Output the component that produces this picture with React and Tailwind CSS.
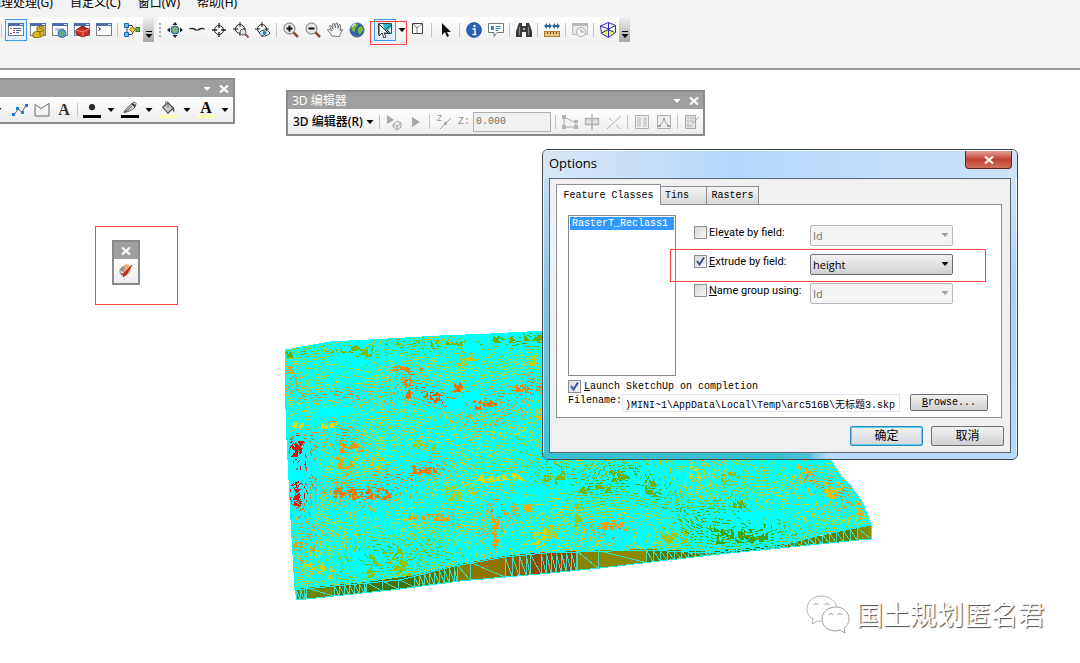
import React from 'react';

// --- Terrain data ---

// Hills and valleys of the surface: x, y, radius x, radius y, height (-1 green, 1 red)
const BUMPS = [
  [300, 352, 24, 10, -0.6], [360, 352, 40, 14, -0.5], [430, 346, 40, 12, -0.6], [515, 340, 50, 10, -0.8],
  [292, 375, 12, 14, 0.6], [320, 395, 50, 8, 0.6], [345, 375, 30, 10, 0.1], [405, 385, 24, 24, 0.4],
  [435, 395, 26, 14, 0.5], [470, 400, 40, 14, 0.5], [530, 388, 24, 16, 0.5], [505, 422, 18, 10, 0.4],
  [325, 424, 50, 8, 0.2], [298, 450, 14, 18, 1.3], [298, 490, 16, 24, 1.4], [345, 445, 26, 16, 0.5],
  [365, 490, 44, 18, 0.6], [425, 470, 26, 12, 0.5], [495, 480, 34, 10, 0.1], [545, 475, 40, 24, -0.5],
  [430, 518, 34, 10, 0.4], [493, 530, 14, 28, 0.4], [520, 508, 24, 8, 0.4], [380, 560, 50, 20, -0.7],
  [300, 540, 20, 20, 0.4], [440, 555, 30, 16, -0.4], [615, 478, 50, 20, -0.7], [695, 468, 18, 16, 0.3],
  [655, 490, 30, 20, -0.6], [806, 470, 16, 20, 0.4], [615, 528, 30, 12, 0.5], [740, 532, 60, 18, -1.2],
  [845, 490, 30, 24, 0.4], [700, 510, 40, 14, -0.5], [735, 480, 24, 14, -0.3], [830, 515, 30, 12, 0.1],
];

// Larger facets that stay visible between the mesh lines: x, y, width, height, count, colour
const FACETS = [
  [423, 391, 24, 12, 6, '#ee5f00'], [404, 386, 8, 14, 4, '#ea6a00'], [386, 365, 40, 6, 10, '#e88800'],
  [403, 370, 8, 18, 5, '#e88000'], [464, 398, 34, 12, 10, '#e87400'], [515, 384, 30, 8, 7, '#ee8400'],
  [452, 380, 14, 12, 6, '#ea7000'], [290, 441, 14, 16, 8, '#e80c00'], [292, 482, 12, 26, 9, '#ee1800'],
  [290, 421, 55, 7, 11, '#e8dc00'], [338, 440, 28, 14, 11, '#ec9800'], [332, 486, 62, 14, 24, '#e87a00'],
  [403, 466, 38, 8, 10, '#ec7c00'], [470, 474, 60, 8, 12, '#dfe000'], [404, 513, 46, 8, 12, '#eca000'],
  [491, 515, 7, 34, 8, '#eca000'], [510, 503, 26, 10, 8, '#e8b000'], [360, 545, 54, 34, 28, '#90c400'],
  [285, 366, 12, 12, 5, '#eca000'], [284, 350, 12, 6, 3, '#5ab000'], [350, 344, 26, 14, 10, '#80b800'],
  [490, 335, 54, 6, 12, '#6ab000'], [430, 340, 40, 6, 8, '#78b400'], [540, 470, 30, 16, 9, '#86b800'],
  [576, 484, 40, 10, 9, '#74b400'], [606, 469, 22, 12, 8, '#70b000'], [642, 478, 20, 20, 9, '#70b000'],
  [686, 462, 18, 18, 8, '#e4dc00'], [798, 462, 18, 22, 10, '#ecb400'], [597, 520, 32, 14, 12, '#eea400'],
  [714, 526, 56, 18, 34, '#40a400'], [730, 500, 20, 8, 6, '#68b400'], [820, 480, 26, 20, 10, '#ecc000'],
  [545, 525, 22, 14, 8, '#c4cc00'], [573, 503, 12, 26, 8, '#a0c400'], [516, 355, 24, 12, 8, '#c8d000'],
  [455, 352, 24, 14, 7, '#c8c400'], [720, 470, 20, 16, 7, '#98c000'], [334, 455, 20, 30, 11, '#eca400'],
  [288, 538, 30, 14, 6, '#ec9c00'], [528, 528, 22, 20, 10, '#d8d800'], [855, 498, 8, 22, 6, '#ecb400'],
  [300, 560, 40, 20, 9, '#d8d400'], [660, 525, 30, 20, 10, '#a8c400'], [536, 405, 6, 20, 3, '#e8c000'],
  [365, 455, 24, 20, 9, '#d8cc00'], [440, 485, 40, 20, 12, '#c0cc00'], [410, 440, 30, 10, 6, '#a8c800'],
];

const PALETTE = ['#48a800', '#70b400', '#98c000', '#bccc00', '#dcd800', '#e8bc00', '#ec9800', '#ec7400', '#e84400', '#e00c00'];

// Upper and lower edge of the extruded side wall
const WALL_TOP = [[295, 589], [335, 585], [400, 579], [455, 565], [505, 556], [545, 552], [645, 549], [710, 552], [780, 545], [820, 534], [871, 525]];
const WALL_BOTTOM = [[297, 600], [400, 589], [460, 581], [540, 574], [600, 568], [660, 561], [720, 554], [780, 548], [869, 539], [871, 539]];

// Wall panels: start, end, step of the mesh, fill
const PANELS = [
  [296, 306, 4, '#6c8400'], [306, 334, 28, '#6c8400'], [334, 366, 5, '#4c7400'], [366, 414, 16, '#467200'],
  [414, 457, 5, '#587800'], [457, 470, 13, '#8a8000'], [470, 505, 35, '#907400'], [505, 530, 7, '#8c6000'],
  [530, 541, 11, '#904c00'], [541, 577, 5, '#884c00'], [577, 598, 21, '#848400'], [598, 646, 48, '#8c8a00'],
  [646, 712, 7, '#587c00'], [712, 780, 8, '#407400'], [780, 857, 7, '#608000'], [857, 871, 14, '#848c00'],
];

// --- Helper functions ---

function createRandom(seed) {
  let s = seed;
  return () => {
    s = (s * 1664525 + 1013904223) % 4294967296;
    return s / 4294967296;
  };
}

function edgeY(points, x) {
  for (let i = 1; i < points.length; i++) {
    const [x0, y0] = points[i - 1];
    const [x1, y1] = points[i];
    if (x <= x1) return y0 + ((y1 - y0) * (x - x0)) / (x1 - x0);
  }
  return points[points.length - 1][1];
}

function heightAt(x, y) {
  let h = Math.sin(x / 23 + y / 17) * 0.1 + Math.sin(x / 11 - y / 9) * 0.08;
  BUMPS.forEach(([bx, by, rx, ry, v]) => {
    h += v * Math.exp(-(((x - bx) / rx) ** 2) - ((y - by) / ry) ** 2);
  });
  return h;
}

// One path per palette colour, made of short strokes that follow the contours
function buildContours() {
  const random = createRandom(77);
  const paths = PALETTE.map(() => '');
  for (let row = 334; row < 592; row += 3) {
    for (let col = 284; col < 872; col += 5) {
      const x = col + random() * 3;
      const y = row + Math.sin(x / 14 + row / 30) * 3 + Math.cos(x / 37) * 4 + random() * 0.6;
      const skip = random();
      if (x > 552 && y < 456) continue;
      const cover = 0.76 + 0.5 * Math.sin(x / 31 + y / 13) * Math.sin(y / 21 - x / 57);
      if (skip > cover) continue;
      const h = heightAt(x, y);
      const gx = heightAt(x + 1, y) - h;
      const gy = (heightAt(x, y + 1) - h) * 1.4 + 0.025;
      const len = Math.hypot(gx, gy) || 1;
      const size = 2 + random() * 3;
      const dx = (gy / len) * size;
      const dy = (-gx / len) * size;
      const index = Math.max(0, Math.min(9, Math.round(4 + h * 4.6 + (random() - 0.5) * 1.6)));
      paths[index] += `M${x.toFixed(1)} ${y.toFixed(1)}l${dx.toFixed(1)} ${dy.toFixed(1)}`;
    }
  }
  return paths;
}

function buildFacets() {
  const random = createRandom(12);
  return FACETS.map(([fx, fy, w, h, count, fill]) => {
    let d = '';
    for (let i = 0; i < count; i++) {
      const width = 3 + random() * 5;
      const height = 3 + random() * 5;
      const x = fx + random() * Math.max(1, w - width);
      const y = fy + random() * Math.max(1, h - height);
      const kind = Math.floor(random() * 4);
      if (kind === 0) d += `M${x} ${y}h${width}l${-width / 2} ${height}z`;
      if (kind === 1) d += `M${x} ${y + height}h${width}v${-height}z`;
      if (kind === 2) d += `M${x} ${y}v${height}h${width}z`;
      if (kind === 3) d += `M${x} ${y + height}h${width}l${-width / 2} ${-height}z`;
    }
    return { d, fill };
  });
}

function buildWall() {
  return PANELS.map(([start, end, step, fill]) => {
    const points = `${start},${edgeY(WALL_TOP, start)} ${end},${edgeY(WALL_TOP, end)} ${end},${edgeY(WALL_BOTTOM, end)} ${start},${edgeY(WALL_BOTTOM, start)}`;
    let mesh = '';
    for (let x = start; x < end; x += step) {
      const next = Math.min(end, x + step);
      mesh += `M${x} ${edgeY(WALL_BOTTOM, x)}V${edgeY(WALL_TOP, x)}L${next} ${edgeY(WALL_BOTTOM, next)}`;
    }
    return { points, mesh, fill };
  });
}

const CONTOURS = buildContours();
const FACET_PATHS = buildFacets();
const WALL = buildWall();

function Terrain() {
  const surface =
    'M285 350L308 346L330 342L370 340L440 336L490 334L545 331L700 331L818 452L832 462L841 476L850 485L862 502L867 513L871 525L820 535L780 546L710 553L645 550L545 553L505 557L455 566L400 580L335 586L295 590L291 520L287 440L285 380Z';
  return (
    <svg className="absolute left-[280px] top-[255px] h-[280px] w-[600px]" viewBox="280 325 600 280" shapeRendering="crispEdges" aria-hidden="true">
      <clipPath id="surface"><path d={surface} /></clipPath>
      <path d={surface} fill="#00ffff" />
      <g clipPath="url(#surface)">
        {CONTOURS.map((d, i) => (
          <path key={i} d={d} stroke={PALETTE[i]} strokeWidth="1" fill="none" />
        ))}
        {FACET_PATHS.map((facet, i) => (
          <path key={i} d={facet.d} fill={facet.fill} />
        ))}
      </g>
      {WALL.map((panel) => (
        <g key={panel.points}>
          <polygon points={panel.points} fill={panel.fill} />
          <path d={panel.mesh} stroke="#40dcc0" strokeWidth="1" fill="none" />
        </g>
      ))}
      <polyline points={WALL_BOTTOM.map((p) => p.join(',')).join(' ')} stroke="#20f0e8" strokeWidth="1" fill="none" />
      <path d="M295 589L297 600M871 525V539" stroke="#20f0e8" strokeWidth="1" fill="none" />
      <path d={surface} stroke="#00ffff" strokeWidth="1" fill="none" />
    </svg>
  );
}

// --- Icons ---

function Icon({ children, className = 'size-4' }) {
  return (
    <svg className={`${className} shrink-0`} viewBox="0 0 16 16" fill="none" aria-hidden="true">
      {children}
    </svg>
  );
}

function WindowFrame() {
  return (
    <>
      <rect x="0.5" y="1.5" width="15" height="12" fill="#fff" stroke="#7c8088" />
      <path d="M0 1h16v3H0z" fill="#4c6cac" />
      <path d="M12 2h3v1h-3z" fill="#d8e4f8" />
    </>
  );
}

const ICONS = {
  contents: (
    <>
      <WindowFrame />
      <path d="M2 6.5h2M5 8.5h2M5 10.5h2" stroke="#d04040" />
      <path d="M5 6.5h8M8 8.5h5M8 10.5h3M2 11.5h2" stroke="#3c70b8" />
    </>
  ),
  catalog: (
    <>
      <WindowFrame />
      <path d="M3 11l4-2v-4l4-1 3 1v8l-5 3-6-1z" fill="#e0b820" stroke="#8c6c08" />
      <path d="M7 9l3 1v4M10 10l4-2M9 6l3 1" stroke="#7c6008" />
    </>
  ),
  search: (
    <>
      <WindowFrame />
      <path d="M3 6h9v3H3z" fill="#c0ccdc" />
      <circle cx="10" cy="11.500" r="4" fill="#58a8d8" stroke="#2c6c98" />
      <path d="M8 10l3-1 1 2-2 3z" fill="#60b050" />
    </>
  ),
  toolbox: (
    <>
      <WindowFrame />
      <path d="M2 8l5-3 8 2v5l-6 3-7-3z" fill="#cc3028" stroke="#781410" />
      <path d="M2 8l7 2 6-3M9 10v5" stroke="#f08478" />
      <path d="M6 6l2-2 3 1v2" stroke="#641410" />
    </>
  ),
  python: (
    <>
      <WindowFrame />
      <path d="M2.500 5.500l2 1.500-2 1.500" stroke="#202020" />
    </>
  ),
  model: (
    <>
      <path d="M3 5v6M5 3.500h3l2 3.500M5 12.500h3l2-4M10 7.500h4" stroke="#404040" />
      <path d="M0.500 1.500h4v4h-4zM0.500 10.500h4v4h-4z" fill="#68b8f0" stroke="#1c68b0" />
      <path d="M8.500 5l3 2.500-3 3-3-3z" fill="#f0d040" stroke="#907010" />
      <rect x="12" y="5.500" width="3.500" height="4" fill="#68b858" stroke="#307828" />
    </>
  ),
  navigate: (
    <>
      <circle cx="8" cy="8" r="4" fill="#58a0d0" stroke="#406080" />
      <path d="M6 6l3-1 2 3-3 3-2-2z" fill="#90b850" />
      <path d="M8 0l2.500 3h-5zM8 16l2.500-3h-5zM0 8l3-2.500v5zM16 8l-3-2.500v5z" fill="#202020" />
    </>
  ),
  fly: <path d="M0 7c3-1.500 5-1 7 .5l1 1 1-1c2-1.500 4-2 7-.5-3-.3-5 0-6 1.200H6C5 7 3 6.700 0 7z" fill="#202020" stroke="#202020" strokeWidth="0.500" />,
  center: (
    <>
      <circle cx="8" cy="8" r="4.500" stroke="#202020" />
      <path d="M8 1v5M8 10v5M1 8h5M10 8h5" stroke="#202020" strokeWidth="1.300" />
    </>
  ),
  zoomTarget: (
    <>
      <circle cx="7" cy="7" r="4.500" stroke="#202020" />
      <path d="M7 0v5M0 7h5M7 10v4M10 7h3" stroke="#202020" />
      <circle cx="10" cy="10" r="3" fill="#e0e0e0" stroke="#606060" />
      <path d="M12 12l3.500 3.500" stroke="#885850" strokeWidth="2" />
    </>
  ),
  observer: (
    <>
      <circle cx="7" cy="7" r="4.500" stroke="#202020" />
      <path d="M7 0v5M0 7h5M7 10v5M10 7h4" stroke="#202020" />
      <path d="M4 11c3-4 8-4 11 0-3 4-8 4-11 0z" fill="#e8f4fc" stroke="#404040" />
      <circle cx="9.500" cy="11" r="2" fill="#2080c0" />
    </>
  ),
  zoomIn: (
    <>
      <path d="M10 10l5 5" stroke="#984838" strokeWidth="2.500" />
      <circle cx="6.500" cy="6.500" r="5.500" fill="#e8e8e8" stroke="#707070" />
      <path d="M3.500 6.500h6M6.500 3.500v6" stroke="#101010" strokeWidth="2" />
    </>
  ),
  zoomOut: (
    <>
      <path d="M10 10l5 5" stroke="#984838" strokeWidth="2.500" />
      <circle cx="6.500" cy="6.500" r="5.500" fill="#e8e8e8" stroke="#707070" />
      <path d="M3.500 6.500h6" stroke="#101010" strokeWidth="2" />
    </>
  ),
  pan: (
    <path d="M5 14l-2-3-2.500-3 1-1L5 9 2.500 4l1-1L6 7 5.500 2l1.500-.5L8.500 6 9 1l1.500.2L11 6.500 12.500 2.500l1 .5-.5 6 1.500-2 1 .5-2 4-1 3z" fill="#fff" stroke="#686868" strokeWidth="0.900" />
  ),
  globe: (
    <>
      <circle cx="8" cy="8" r="7" fill="#2c64ac" stroke="#506888" />
      <path d="M2 5c2-3 5-3 7-3l-1 3-2 1v3l-2 1zM9 6l4-2 1 4-3 5-2-3z" fill="#80b838" />
      <path d="M3 5c1-2 3-3 4-3" stroke="#c0e0f8" strokeWidth="1.500" />
    </>
  ),
  selectFeatures: (
    <>
      <path d="M1.500 1.500h13v10h-13z" fill="#fff" stroke="#404040" />
      <path d="M6 2h8v3l-3 3 3 3H8z" fill="#20b8d0" />
      <path d="M9 7l5-4M10 8l3 3" stroke="#404040" />
      <path d="M2 2v12l3-3 2 5 2-1-2-4h4z" fill="#fff" stroke="#303030" />
    </>
  ),
  clearSelection: (
    <>
      <path d="M2.500 1.500h10v10h-10z" fill="#fff" stroke="#404040" />
      <path d="M3 2l4 4 5-4M7 6v5" stroke="#808080" />
    </>
  ),
  pointer: <path d="M4 1v12l3-3 2 5 2-1-2-4h4z" fill="#101010" />,
  identify: (
    <>
      <circle cx="8" cy="8" r="7.500" fill="#2860b8" stroke="#183c80" strokeWidth="0.600" />
      <path d="M6.500 7H9v5M6.500 12.500h4" stroke="#fff" strokeWidth="1.500" />
      <circle cx="8.500" cy="4" r="1.200" fill="#fff" />
    </>
  ),
  popup: (
    <>
      <path d="M0.500 1.500h15v9H9l-3 4v-4H0.500z" fill="#fff" stroke="#707880" />
      <path d="M3 4h3v4H3z" fill="#3c80b0" />
      <path d="M7.500 4.500h5M7.500 6.500h5M7.500 8.500h3" stroke="#3c80c0" />
    </>
  ),
  find: (
    <>
      <path d="M3 1h3v3h4V1h3l3 8v6h-6v-5H6v5H0V9z" fill="#383838" />
      <path d="M3.500 5v8M12.500 5v8" stroke="#888888" strokeWidth="1.300" />
      <path d="M7 6h2v2H7z" fill="#b0b0b0" />
    </>
  ),
  measure: (
    <>
      <path d="M0 4l3-3v2h2v-2l3 3-3 3V5H3v2zM8 4l3-3v2h2v-2l3 3-3 3V5h-2v2z" fill="#2c6498" />
      <rect x="0.500" y="9.500" width="15" height="5" fill="#e8c080" stroke="#a87838" />
      <path d="M3.500 10v2M6.500 10v2M9.500 10v2M12.500 10v2" stroke="#785020" />
    </>
  ),
  time: (
    <>
      <path d="M0.500 1.500h15v11h-15z" fill="#e8e8e8" stroke="#b8b8b8" />
      <path d="M1 3h14" stroke="#b8b8b8" strokeWidth="2" />
      <circle cx="9" cy="10" r="4.500" fill="#f4f4f4" stroke="#b0b0b0" />
      <path d="M9 7v3h3" stroke="#a0a0a0" />
    </>
  ),
  scene: (
    <>
      <path d="M1.500 10l6-3 7 2-6 6z" fill="#f0f040" />
      <path d="M0.500 4l8-3.500 7 3v7L8.500 15.500l-7-4zM0.500 4l8 3 7-3.500M8.500 7v8M8.500.500v7l-7 3.500M8.500 7.500l6 3" stroke="#2828c0" />
    </>
  ),
  vertices: (
    <>
      <path d="M2 13l4-6 4 3 4-7" stroke="#606870" />
      <path d="M0 11h3v3H0zM4 5h3v3H4zM9 9h3v3H9zM13 2h3v3h-3z" fill="#2878d8" />
    </>
  ),
  polygon: <path d="M1 2.500l6 4 8-5v12.500H1z" fill="#f4f4f4" stroke="#686868" />,
  pen: (
    <>
      <path d="M1 13c3-6 6-6 8-9l4-3 2 2-2 5c-3 2-5 4-12 5z" fill="#d8d8d8" stroke="#383838" />
      <path d="M2 13l8-7" stroke="#383838" />
      <path d="M10 3l4 3" stroke="#303030" strokeWidth="2" />
    </>
  ),
  bucket: (
    <>
      <path d="M2 7l6-5 6 6-6 6z" fill="#d0d0d0" stroke="#484848" strokeWidth="1.300" />
      <path d="M8 8V2c0-2-3-2-3 0v4" stroke="#585858" />
      <path d="M12 6c3 0 4 3 3 7-2-3-3-4-3-7z" fill="#585858" />
    </>
  ),
  dot: <circle cx="8" cy="7" r="3.500" fill="#282828" />,
  editPlacement: (
    <>
      <path d="M1 1v9l7-4z" fill="#a8a8a8" />
      <path d="M7 10l4-3 4 2v4l-4 3-4-3zM7 10l4 2 4-3M11 12v4" fill="#e4e4e4" stroke="#a8a8a8" />
    </>
  ),
  arrowRight: <path d="M4 3v10l8-5z" fill="#a8a8a8" />,
  zSlash: (
    <>
      <path d="M1.500 1.500h4l-4 5h4M4 15L15 4" stroke="#a0a0a0" />
      <circle cx="9.500" cy="9.500" r="1.500" fill="#a0a0a0" />
    </>
  ),
  reshape: (
    <>
      <path d="M2 3v10h12V9L2 3" stroke="#acacac" />
      <path d="M0 1h4v4H0zM0 11h4v4H0zM12 11h4v4h-4zM12 6h4v3h-4z" fill="#b4b4b4" />
    </>
  ),
  split: <path d="M1.500 4.500h13v6h-13zM8 0v16" fill="#e0e0e0" stroke="#b0b0b0" strokeWidth="1.400" />,
  cross: <path d="M1 15L15 2M3 4l3 3M10 11l4 4" stroke="#b0b0b0" />,
  table: (
    <>
      <path d="M1.500 1.500h13v13h-13z" fill="#f0f0f0" stroke="#b0b0b0" />
      <path d="M3 3h4v10H3zM9 3h4v10H9z" fill="#d4d4d4" />
    </>
  ),
  sketch: (
    <>
      <path d="M1.500 1.500h13v13h-13z" fill="#ececec" stroke="#b0b0b0" />
      <path d="M3 12l3-3 2-4 2 4 3 3" stroke="#a0a0a0" />
      <path d="M2 11h3v2H2zM7 4h2v2H7zM11 11h3v2h-3z" fill="#a0a0a0" />
    </>
  ),
  attributes: <path d="M1.500 1.500h10v13h-10zM3 4h2M6 4h4M3 7h2M6 7h3M3 10h2M8 10l7-7M3 12h5" fill="#e4e4e4" stroke="#a8a8a8" />,
  sketchup: (
    <>
      <path d="M3 5l5-4 5 2-1 7-6 2z" fill="#e8b070" />
      <path d="M1 7l4-4 2 2-2 4z" fill="#909090" />
      <path d="M2 8c0 4 5 5 8 2" stroke="#a0a0a0" strokeWidth="1.500" />
      <path d="M14 2L8 12l-3 2 1-4z" fill="#d82020" stroke="#901818" strokeWidth="0.600" />
      <path d="M3 11l4 1" stroke="#d02020" strokeWidth="1.500" />
    </>
  ),
};

const CloseGlyph = () => (
  <svg className="size-2.5" viewBox="0 0 10 10" aria-hidden="true">
    <path d="M1 1.500L9 8.500M9 1.500L1 8.500" stroke="#fff" strokeWidth="2.200" />
  </svg>
);

const Caret = ({ className = 'text-black' }) => (
  <svg className={`${className} h-1 w-2 shrink-0`} viewBox="0 0 8 4" aria-hidden="true">
    <path d="M0.500 0h7L4 4z" fill="currentColor" />
  </svg>
);

// --- Toolbar parts ---

function ToolButton({ icon, label, active = false }) {
  return (
    <button
      type="button"
      aria-label={label}
      className={`flex size-[22px] shrink-0 items-center justify-center ${active ? 'border border-[#3c9cf0] bg-[#e4f0fc]' : ''}`}
    >
      <Icon>{ICONS[icon]}</Icon>
    </button>
  );
}

const Separator = () => <span className="ml-0.5 mr-[3px] h-3.5 w-px shrink-0 bg-[#c4c4c4]" />;

function Overflow() {
  return (
    <button type="button" aria-label="Toolbar options" className="flex h-full w-[11px] shrink-0 flex-col items-center justify-end gap-0.5 bg-linear-to-b from-[#f0f0f0] to-[#a8a8a8] pb-1">
      <span className="h-px w-1.5 bg-black" />
      <Caret />
    </button>
  );
}

const MENUS = ['地理处理(G)', '自定义(C)', '窗口(W)', '帮助(H)'];

function Header() {
  return (
    <header className="h-[70px] shrink-0 overflow-hidden border-b-2 border-[#999] bg-[#f3f3f3]">
      <nav className="-ml-[11px] flex h-[11px] items-end gap-[17px]">
        {MENUS.map((menu) => (
          <button key={menu} type="button" className="shrink-0 whitespace-nowrap text-xs leading-4">{menu}</button>
        ))}
      </nav>
      <div className="mt-1.5 flex h-[25px] gap-[3px]">
        <div className="flex shrink-0 items-center rounded-r-sm bg-linear-to-b from-white to-[#efefef]">
          <span className="ml-px mr-[3px] h-3.5 w-px bg-[#c4c4c4]" />
          <ToolButton icon="contents" label="Table of contents" active />
          <ToolButton icon="catalog" label="Catalog" />
          <ToolButton icon="search" label="Search" />
          <ToolButton icon="toolbox" label="ArcToolbox" />
          <ToolButton icon="python" label="Python" />
          <Separator />
          <ToolButton icon="model" label="ModelBuilder" />
          <Overflow />
        </div>
        <div className="flex shrink-0 items-center rounded-sm bg-linear-to-b from-white to-[#efefef]">
          <span className="ml-0.5 mr-[3px] h-3.5 w-0.5 border-l-2 border-dotted border-[#b0b0b0]" />
          <ToolButton icon="navigate" label="Navigate" />
          <ToolButton icon="fly" label="Fly" />
          <ToolButton icon="center" label="Center on target" />
          <ToolButton icon="zoomTarget" label="Zoom to target" />
          <ToolButton icon="observer" label="Set observer" />
          <Separator />
          <ToolButton icon="zoomIn" label="Zoom in" />
          <ToolButton icon="zoomOut" label="Zoom out" />
          <ToolButton icon="pan" label="Pan" />
          <ToolButton icon="globe" label="Full extent" />
          <Separator />
          <div className="relative flex items-center">
            <ToolButton icon="selectFeatures" label="Select features" active />
            <button type="button" aria-label="Selection options" className="flex h-[22px] w-[11px] items-center justify-center"><Caret /></button>
            <span className="pointer-events-none absolute -left-1 top-0.5 h-6 w-[37px] border border-[#ff4040]" />
          </div>
          <ToolButton icon="clearSelection" label="Clear selection" />
          <Separator />
          <ToolButton icon="pointer" label="Select elements" />
          <Separator />
          <ToolButton icon="identify" label="Identify" />
          <ToolButton icon="popup" label="HTML popup" />
          <Separator />
          <ToolButton icon="find" label="Find" />
          <Separator />
          <ToolButton icon="measure" label="Measure" />
          <Separator />
          <ToolButton icon="time" label="Time slider" />
          <Separator />
          <ToolButton icon="scene" label="3D scene" />
          <Overflow />
        </div>
      </div>
    </header>
  );
}

// --- Floating toolbars ---

function ToolWindow({ title, className, menu = true, children }) {
  return (
    <section className={`absolute border-2 border-[#8a8a8a] bg-[#e8e8e8] ${className}`}>
      <div className={`flex h-[17px] items-center gap-2 bg-[#9f9f9f] px-1 text-white ${menu ? '' : 'justify-center'}`}>
        {title && <h2 className="text-xs leading-4">{title}</h2>}
        {menu && <button type="button" aria-label="Options" className="ml-auto"><Caret className="text-white" /></button>}
        <button type="button" aria-label="Close"><CloseGlyph /></button>
      </div>
      {children}
    </section>
  );
}

function ColorTool({ icon, label, bar, letter }) {
  return (
    <button type="button" aria-label={label} className="flex h-[22px] w-[38px] shrink-0 items-center gap-1.5">
      <span className="flex w-[18px] flex-col items-center">
        {letter ? <span className="h-3.5 font-['Liberation_Serif',serif] text-base font-bold leading-3.5">{letter}</span> : <Icon className="h-3.5 w-4">{ICONS[icon]}</Icon>}
        <span className={`h-[3px] w-full ${bar}`} />
      </span>
      <Caret />
    </button>
  );
}

function DrawingToolbar() {
  return (
    <ToolWindow className="-left-1 top-2 w-[239px]">
      <div className="flex h-[25px] items-center bg-linear-to-b from-white to-[#ececec]">
        <span className="flex w-[11px] shrink-0 items-center"><Caret className="-ml-1 text-black" /></span>
        <ToolButton icon="vertices" label="New line" />
        <ToolButton icon="polygon" label="New polygon" />
        <button type="button" aria-label="New text" className="size-[22px] shrink-0 font-['Liberation_Serif',serif] text-base font-bold leading-5 text-[#303030]">A</button>
        <Separator />
        <div className="ml-0.5 flex">
          <ColorTool icon="dot" label="Marker colour" bar="bg-black" />
          <ColorTool icon="pen" label="Line colour" bar="bg-black" />
          <ColorTool icon="bucket" label="Fill colour" bar="bg-[#ffffb0]" />
          <ColorTool letter="A" label="Text colour" bar="bg-[#ffffb0]" />
        </div>
      </div>
    </ToolWindow>
  );
}

function EditorToolbar() {
  return (
    <ToolWindow title="3D 编辑器" className="left-[286px] top-5 w-[419px]">
      <div className="flex h-[25px] items-center bg-linear-to-b from-white to-[#ececec] pl-[5px]">
        <button type="button" className="flex shrink-0 items-center gap-[3px] whitespace-nowrap pr-[3px] text-xs font-medium leading-4">
          3D 编辑器(R)
          <Caret />
        </button>
        <Separator />
        <ToolButton icon="editPlacement" label="Edit placement" />
        <ToolButton icon="arrowRight" label="Edit" />
        <Separator />
        <ToolButton icon="zSlash" label="Z mode" />
        <label htmlFor="z-value" className="w-5 text-center font-['Liberation_Mono',monospace] text-[10px] text-[#909090]">Z:</label>
        <input id="z-value" disabled defaultValue="0.000" className="mr-0.5 h-5 w-[78px] shrink-0 border border-[#b0b0b0] bg-[#f0f0f0] px-0.5 font-['Liberation_Mono',monospace] text-[10px] text-[#707070]" />
        <Separator />
        <ToolButton icon="reshape" label="Modify sketch" />
        <ToolButton icon="split" label="Split" />
        <ToolButton icon="cross" label="Intersect" />
        <Separator />
        <ToolButton icon="table" label="Attributes table" />
        <ToolButton icon="sketch" label="Sketch properties" />
        <Separator />
        <ToolButton icon="attributes" label="Attributes" />
      </div>
    </ToolWindow>
  );
}

// --- Options dialog ---

const MONO = "font-['Liberation_Mono','Noto_Sans_CJK_SC',monospace] text-[10px]";

const FIELDS = [
  { id: 'elevate', before: 'Ele', key: 'v', after: 'ate by field:', value: 'Id', enabled: false },
  { id: 'extrude', before: '', key: 'E', after: 'xtrude by field:', value: 'height', enabled: true },
  { id: 'group', before: '', key: 'N', after: 'ame group using:', value: 'Id', enabled: false },
];

function Checkbox({ id, checked = false }) {
  return (
    <span className="relative flex size-[13px] shrink-0">
      <input id={id} type="checkbox" defaultChecked={checked} className="peer size-[13px] appearance-none border border-[#8e8f8f] bg-linear-to-br from-[#d4d8dc] to-[#f8f8f8]" />
      <svg className="pointer-events-none absolute inset-0 hidden size-[13px] peer-checked:block" viewBox="0 0 13 13" aria-hidden="true">
        <path d="M3 6l2.500 3.500L10 2.500" stroke="#3c50a0" strokeWidth="2" fill="none" />
      </svg>
    </span>
  );
}

function FieldRow({ field }) {
  return (
    <div className="flex h-[21px] items-start">
      <span className="mt-px flex"><Checkbox id={field.id} checked={field.enabled} /></span>
      <label htmlFor={field.id} className="ml-0.5 w-[101px] shrink-0 whitespace-nowrap font-['Roboto',sans-serif] text-[11px] leading-4">
        {field.before}<u>{field.key}</u>{field.after}
      </label>
      <span className="relative flex">
        <select
          aria-label={`${field.id} field`}
          disabled={!field.enabled}
          className={`h-[21px] w-[143px] appearance-none rounded-xs border pl-0.5 font-['Open_Sans',sans-serif] text-[11px] leading-4 ${
            field.enabled ? 'border-[#707070] bg-linear-to-b from-[#f2f2f2] to-[#d0d0d0] text-black' : 'border-[#b4b8bc] bg-[#f4f4f4] text-[#707070] opacity-100'
          }`}
        >
          <option>{field.value}</option>
        </select>
        <span className="pointer-events-none absolute right-1 top-2">
          <Caret className={field.enabled ? 'text-black' : 'text-[#a0a0a0]'} />
        </span>
      </span>
    </div>
  );
}

function OptionsDialog() {
  return (
    <section role="dialog" aria-label="Options" className="absolute left-[542px] top-[79px] flex w-[476px] flex-col overflow-hidden rounded-md border border-[#404850] bg-[#b8dafc]">
      <div className="flex h-7 items-start justify-between border-t border-white/80 bg-linear-to-r from-[#d8e6f4] via-[#b4d8fc] via-40% to-[#cce2f8] pl-1.5 pr-[5px]">
        <h2 className="font-['Open_Sans',sans-serif] text-[13px] leading-6">Options</h2>
        <button type="button" aria-label="Close" className="flex h-[18px] w-[47px] items-center justify-center rounded-b-sm border border-t-0 border-[#602020] bg-linear-to-b from-[#e0a098] via-[#c04030] via-50% to-[#d07060]">
          <CloseGlyph />
        </button>
      </div>
      <div className="flex">
        <div className="w-1.5 shrink-0 border-l border-white/70 bg-linear-to-b from-[#c8dcf0] via-[#88c4ec] via-40% to-[#38c0d4]" />
        <div className="min-w-0 flex-1 border border-[#5c6470] bg-[#f0f0f0] px-1.5 pt-[5px]">
          <div role="tablist" className={`flex items-end ${MONO}`}>
            <button role="tab" type="button" aria-selected="true" className="-mb-px h-[21px] w-[105px] whitespace-nowrap border border-b-0 border-[#8c8e94] bg-white">Feature Classes</button>
            <button role="tab" type="button" aria-selected="false" className="h-[18px] w-[46px] border border-b-0 border-l-0 border-[#8c8e94] bg-linear-to-b from-[#f4f4f4] to-[#d8d8d8] pl-1 text-left">Tins</button>
            <button role="tab" type="button" aria-selected="false" className="h-[18px] w-[52px] border border-b-0 border-l-0 border-[#8c8e94] bg-linear-to-b from-[#f4f4f4] to-[#d8d8d8]">Rasters</button>
          </div>
          <div role="tabpanel" className="mr-0.5 border border-[#8c8e94] bg-white pb-[5px] pl-[11px] pt-2.5">
            <div className="flex">
              <ul role="listbox" aria-label="Feature classes" className={`h-[161px] w-[108px] shrink-0 border border-[#828790] p-px ${MONO}`}>
                <li role="option" aria-selected="true" className="h-[13px] bg-[#3399ff] pl-0.5 leading-3.5 text-white">RasterT_Reclass1</li>
              </ul>
              <div className="relative ml-[18px] mt-2.5 flex flex-col gap-2 self-start">
                {FIELDS.map((field) => (
                  <FieldRow key={field.id} field={field} />
                ))}
                <span className="pointer-events-none absolute -left-6 top-6 h-[33px] w-[316px] border border-[#ff4040]" />
              </div>
            </div>
            <div className="mt-0.5 flex h-4 items-center gap-[3px]">
              <Checkbox id="launch" checked />
              <label htmlFor="launch" className={MONO}><u>L</u>aunch SketchUp on completion</label>
            </div>
            <div className="flex h-[18px] items-start">
              <label htmlFor="filename" className={`w-[54px] shrink-0 leading-3.5 ${MONO}`}>Filename:</label>
              <input id="filename" defaultValue=")MINI~1\AppData\Local\Temp\arc516B\无标题3.skp" className={`h-[18px] w-[278px] shrink-0 border border-[#e0e4ec] px-0.5 ${MONO}`} />
              <button type="button" className={`ml-2.5 h-[17px] w-[78px] shrink-0 rounded-xs border border-[#707070] bg-linear-to-b from-[#f2f2f2] to-[#d0d0d0] leading-3.5 ${MONO}`}><u>B</u>rowse...</button>
            </div>
          </div>
          <div className="flex justify-end gap-2 pb-1.5 pt-2">
            <button type="button" className="h-5 w-[73px] rounded-xs border border-[#2c8cc0] bg-linear-to-b from-[#f2f2f2] to-[#d4d8dc] text-xs leading-4 ring-1 ring-inset ring-[#5cd0f4]">确定</button>
            <button type="button" className="h-5 w-[73px] rounded-xs border border-[#707070] bg-linear-to-b from-[#f2f2f2] to-[#d0d0d0] text-xs leading-4">取消</button>
          </div>
        </div>
        <div className="w-1.5 shrink-0 border-r border-white/70 bg-linear-to-b from-[#d4e4f4] via-[#a8d0f8] via-40% to-[#b8d8f8]" />
      </div>
      <div className="h-1.5 bg-linear-to-r from-[#38c0d4] from-50% via-[#50c0dc] via-56% to-[#b8d8fc] to-60%" />
    </section>
  );
}

function Watermark() {
  return (
    <div className="absolute bottom-7 right-[35px] flex items-center gap-1.5">
      <svg className="h-10 w-11" viewBox="0 0 44 40" fill="#fff" stroke="#a0a0a0" aria-hidden="true">
        <path d="M15 1C7 1 1 7 1 14c0 5 2 8 6 10l-1 5 6-3 5 1c8 0 14-6 14-13S24 1 15 1z" strokeWidth="0.800" />
        <path d="M30 12c-8 0-14 5-14 12s6 12 14 12l4-1 5 3-1-5c3-2 5-5 5-9 0-7-6-12-13-12z" />
        <path d="M8 10c1-2 3-2 4 0M19 10c1-2 3-2 4 0M23 20c1-2 3-2 4 0M32 20c1-2 3-2 4 0" fill="none" stroke="#808080" />
      </svg>
      <p className="text-[27px] leading-9 text-white [text-shadow:1px_1px_1px_#505050]">国土规划匿名君</p>
    </div>
  );
}

export default function App() {
  return (
    <div className="flex min-h-screen flex-col overflow-hidden bg-white font-['Noto_Sans','Noto_Sans_CJK_SC',sans-serif] text-black">
      <Header />
      <main className="relative min-h-[560px] flex-1">
        <Terrain />
        <DrawingToolbar />
        <EditorToolbar />
        <div className="absolute left-[95px] top-[156px] h-[79px] w-[83px] border border-[#ff4040]" />
        <ToolWindow className="left-28 top-[170px] w-7" menu={false}>
          <div className="flex h-6 items-center justify-center bg-linear-to-b from-white to-[#ececec]">
            <ToolButton icon="sketchup" label="Export to SketchUp" />
          </div>
        </ToolWindow>
        <OptionsDialog />
        <Watermark />
      </main>
    </div>
  );
}
